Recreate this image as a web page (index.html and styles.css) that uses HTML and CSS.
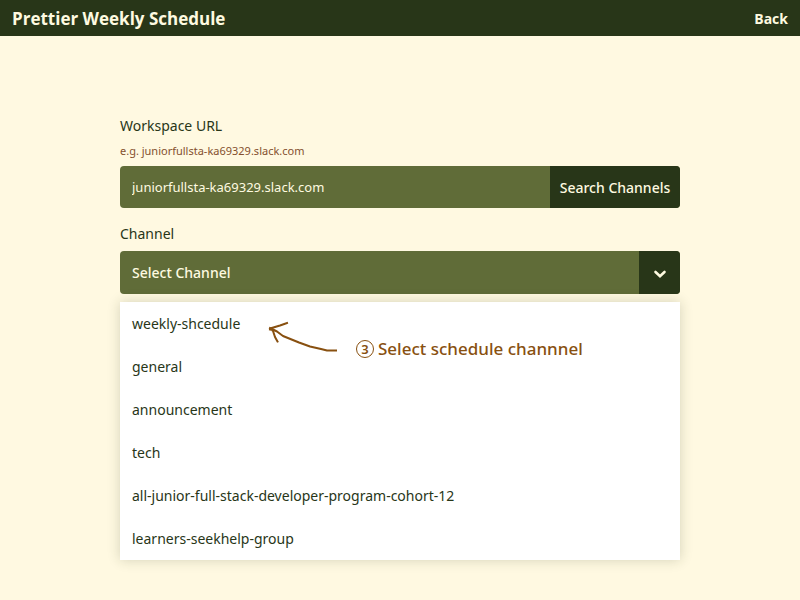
FILE: index.html
```html
<!DOCTYPE html>
<html lang="en">
<head>
<meta charset="utf-8">
<meta name="viewport" content="width=device-width, initial-scale=1">
<title>Prettier Weekly Schedule</title>
<link rel="stylesheet" href="styles.css">
</head>
<body>
<header class="topbar">
  <h1 class="brand">Prettier Weekly Schedule</h1>
  <a class="back" href="#">Back</a>
</header>
<main class="page">
  <form class="form">
    <div class="field">
      <label class="label" for="workspace">Workspace URL</label>
      <p class="hint">e.g. juniorfullsta-ka69329.slack.com</p>
      <div class="control">
        <input class="input" id="workspace" type="text" value="juniorfullsta-ka69329.slack.com">
        <button class="search" type="button">Search Channels</button>
      </div>
    </div>
    <div class="field picker">
      <label class="label" for="channel">Channel</label>
      <button class="control select" id="channel" type="button" aria-haspopup="listbox" aria-expanded="true">
        <span class="value">Select Channel</span>
        <span class="toggle"><svg class="chevron" width="14" height="8" viewBox="0 0 14 8" aria-hidden="true"><path d="M2.500 2 7 6.200 11.500 2" fill="none" stroke="currentColor" stroke-width="2.600" stroke-linecap="round" stroke-linejoin="miter"/></svg></span>
      </button>
      <ul class="menu" role="listbox" aria-label="Channel">
        <li class="option" role="option">weekly-shcedule</li>
        <li class="option" role="option">general</li>
        <li class="option" role="option">announcement</li>
        <li class="option" role="option">tech</li>
        <li class="option" role="option">all-junior-full-stack-developer-program-cohort-12</li>
        <li class="option" role="option">learners-seekhelp-group</li>
      </ul>
      <div class="note">
        <svg class="arrow" width="72" height="36" viewBox="0 0 72 36" aria-hidden="true"><path d="M68 30.500H59L53 29 42 26.500 31 22.500 15 16 9 11.500 2 8M19 3 12 5.500 2 8.500 5 11 7 17 9.500 21.500M2 9.500l5 1" fill="none" stroke="currentColor" stroke-width="2" stroke-linecap="square" stroke-linejoin="round"/></svg>
        <span class="step">3</span>
        <span>Select schedule channnel</span>
      </div>
    </div>
  </form>
</main>
</body>
</html>
```
FILE: styles.css
```css
* { box-sizing: border-box; }
body {
  margin: 0;
  min-height: 100vh;
  background: #fff9e1;
  color: #283618;
  font: 14px/20px "Noto Sans", sans-serif;
}
.topbar {
  display: flex;
  align-items: center;
  justify-content: space-between;
  height: 36px;
  padding: 1px 12px 0;
  background: #283618;
  color: #fefae0;
}
.brand { margin: 0; font: 700 17px/20px "Open Sans", sans-serif; }
.back { color: inherit; font: 700 14px/20px "Open Sans", sans-serif; text-decoration: none; }
.page { padding: 80px 120px 40px; }
.form { display: flex; flex-direction: column; gap: 16px; }
.field { position: relative; }
.label { display: block; }
.hint { margin: 6px 0; font-size: 11px; line-height: 18px; color: #84502e; }
.control {
  display: flex;
  width: 100%;
  height: 42px;
  border-radius: 4px;
  overflow: hidden;
  background: #606c38;
  color: #fefae0;
}
.input {
  flex: 1;
  min-width: 0;
  padding: 0 12px;
  border: 0;
  background: transparent;
  color: inherit;
  font: 13px/20px "Noto Sans", sans-serif;
}
.search {
  width: 130px;
  padding: 2px 0 0;
  border: 0;
  background: #283618;
  color: inherit;
  font: 500 14px/20px "Noto Sans", sans-serif;
}
.select {
  height: 43px;
  margin-top: 7px;
  padding: 0;
  border: 0;
  font: 500 14px/20px "Noto Sans", sans-serif;
  text-align: left;
}
.value { flex: 1; align-self: center; padding-left: 12px; }
.toggle {
  display: grid;
  place-items: center;
  align-self: stretch;
  width: 41px;
  padding-top: 2px;
  background: #283618;
}
.menu {
  margin: 8px 0 0;
  padding: 0;
  list-style: none;
  background: #fff;
  box-shadow: 0 0 12px rgba(40, 54, 24, 0.2);
}
.option { padding: 12px; line-height: 19px; }
.note {
  position: absolute;
  top: 96px;
  left: 148px;
  display: flex;
  align-items: flex-end;
  color: #885010;
  font: 500 17px/22px "Noto Sans", sans-serif;
}
.arrow { margin-bottom: 4px; }
.step {
  display: grid;
  place-items: center;
  width: 18px;
  height: 18px;
  margin: 0 4px 2px 16px;
  border: 1px solid currentColor;
  border-radius: 50%;
  font-size: 13px;
  font-weight: 600;
  line-height: 16px;
}
```
